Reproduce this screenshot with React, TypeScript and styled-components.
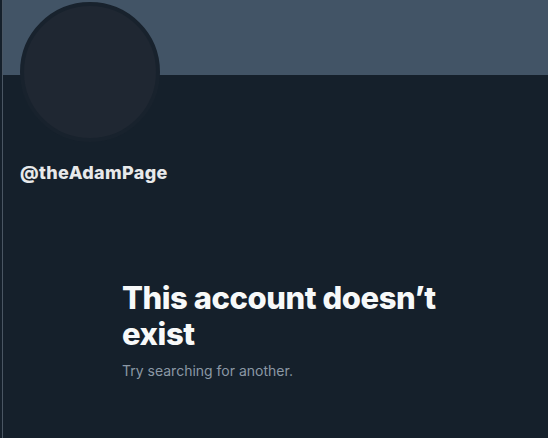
import React from "react";
import styled, { createGlobalStyle } from "styled-components";

const Global = createGlobalStyle`
  html, body { margin: 0; padding: 0; background: #15202b; }
  body { font-family: Inter, "Noto Sans", Roboto, sans-serif; -webkit-font-smoothing: antialiased; }
  #root { min-height: 438px; }
`;

const Page = styled.div`
  display: flex;
  min-height: 438px;
  padding-left: 2px;
  background: #15202b;
`;

const Column = styled.main`
  flex: 1;
  border-left: 1px solid #4a5663;
  display: flex;
  flex-direction: column;
`;

const Banner = styled.div`
  height: 75px;
  background: #425466;
`;

const Header = styled.div`
  padding: 0 17px;
  display: flex;
  flex-direction: column;
`;

const Avatar = styled.div`
  width: 132px;
  height: 132px;
  margin-top: -73px;
  border-radius: 50%;
  border: 4px solid #18222d;
  background: #1f2732;
  position: relative;
`;

const Handle = styled.div`
  margin-top: 20px;
  font-size: 18px;
  font-weight: 800;
  color: #e7e9ea;
  line-height: 22px;
  letter-spacing: 0.35px;
`;

const Empty = styled.div`
  width: 336px;
  margin: 96px 0 0 119px;
  display: flex;
  flex-direction: column;
`;

const Title = styled.h1`
  margin: 0;
  font-size: 31px;
  line-height: 36px;
  font-weight: 800;
  color: #f7f9f9;
  letter-spacing: -0.45px;
`;

const Sub = styled.p`
  margin: 9px 0 0;
  font-size: 14px;
  line-height: 20px;
  color: #8b98a5;
`;

export default function App() {
  return (
    <>
      <Global />
      <Page>
        <Column>
          <Banner />
          <Header>
            <Avatar />
            <Handle>@theAdamPage</Handle>
          </Header>
          <Empty>
            <Title>This account doesn’t exist</Title>
            <Sub>Try searching for another.</Sub>
          </Empty>
        </Column>
      </Page>
    </>
  );
}
